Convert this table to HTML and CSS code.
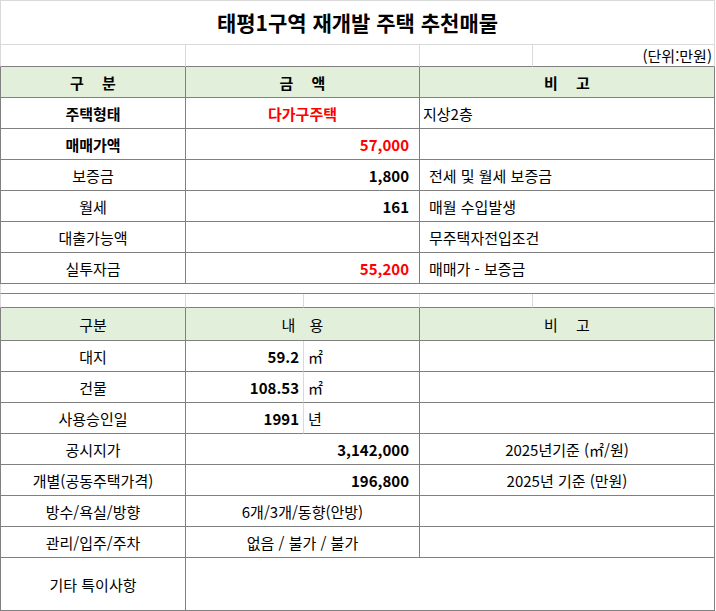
FILE: index.html
```html
<!DOCTYPE html>
<html lang="ko">
<head>
<meta charset="utf-8">
<title>태평1구역 재개발 주택 추천매물</title>
<link rel="stylesheet" href="styles.css">
</head>
<body>
<div class="sheet">
  <!-- title -->
  <div class="c lt first top s5 center title">태평1구역 재개발 주택 추천매물</div>

  <!-- blank / unit row -->
  <div class="c lt first bdk"></div>
  <div class="c lt s2 bdk"></div>
  <div class="c lt bdk"></div>
  <div class="c lt bdk right unit">(단위:만원)</div>

  <!-- table 1 header -->
  <div class="c first hd center bold"><span class="wide">구 분</span></div>
  <div class="c s2 hd center bold"><span class="wide">금 액</span></div>
  <div class="c s2 hd center bold"><span class="wide">비 고</span></div>

  <div class="c first center bold">주택형태</div>
  <div class="c s2 center bold red">다가구주택</div>
  <div class="c s2 note">지상2층</div>

  <div class="c first center bold">매매가액</div>
  <div class="c s2 right num bold red">57,000</div>
  <div class="c s2 note"></div>

  <div class="c first center">보증금</div>
  <div class="c s2 right num bold">1,800</div>
  <div class="c s2 note ind">전세 및 월세 보증금</div>

  <div class="c first center">월세</div>
  <div class="c s2 right num bold">161</div>
  <div class="c s2 note ind">매월 수입발생</div>

  <div class="c first center">대출가능액</div>
  <div class="c s2 right num bold"></div>
  <div class="c s2 note ind">무주택자전입조건</div>

  <div class="c first center">실투자금</div>
  <div class="c s2 right num bold red">55,200</div>
  <div class="c s2 note ind">매매가 - 보증금</div>

  <!-- spacer rows -->
  <div class="c lt first s5 bdk"></div>

  <div class="c lt first bdk"></div>
  <div class="c lt bdk"></div>
  <div class="c lt bdk"></div>
  <div class="c lt bdk"></div>
  <div class="c lt bdk"></div>

  <!-- table 2 header -->
  <div class="c first hd center">구분</div>
  <div class="c s2 hd center"><span class="mid">내 용</span></div>
  <div class="c s2 hd center"><span class="wide">비 고</span></div>

  <div class="c first center">대지</div>
  <div class="c right val bold rlt">59.2</div>
  <div class="c unitcell">㎡</div>
  <div class="c s2"></div>

  <div class="c first center">건물</div>
  <div class="c right val bold rlt">108.53</div>
  <div class="c unitcell">㎡</div>
  <div class="c s2"></div>

  <div class="c first center">사용승인일</div>
  <div class="c right val bold rlt">1991</div>
  <div class="c unitcell">년</div>
  <div class="c s2"></div>

  <div class="c first center">공시지가</div>
  <div class="c s2 right num bold">3,142,000</div>
  <div class="c s2 center">2025년기준 (㎡/원)</div>

  <div class="c first center">개별(공동주택가격)</div>
  <div class="c s2 right num bold">196,800</div>
  <div class="c s2 center">2025년 기준 (만원)</div>

  <div class="c first center">방수/욕실/방향</div>
  <div class="c s2 center">6개/3개/동향(안방)</div>
  <div class="c s2"></div>

  <div class="c first center">관리/입주/주차</div>
  <div class="c s2 center">없음 / 불가 / 불가</div>
  <div class="c s2"></div>

  <div class="c first center">기타 특이사항</div>
  <div class="c s4"></div>
</div>
</body>
</html>
```

FILE: styles.css
```css
html, body {
  margin: 0;
  padding: 0;
  background: #ffffff;
}

.sheet {
  --dk: #808080;
  --lt: #d9d9d9;
  display: grid;
  grid-template-columns: 186px 118px 116px 113px 182px;
  grid-template-rows:
    45px 22px
    31px 31px 31px 31px 31px 31px 31px
    10px 14px
    33px 31px 31px 31px 31px 31px 31px 31px 53px;
  width: 715px;
  font-family: "Noto Sans CJK KR", "Noto Sans", sans-serif;
  font-size: 15px;
  line-height: 1;
  color: #000000;
}

.c {
  box-sizing: border-box;
  display: flex;
  align-items: center;
  padding: 0 3px;
  border-right: 1px solid var(--dk);
  border-bottom: 1px solid var(--dk);
  white-space: nowrap;
  overflow: hidden;
}

.first { border-left: 1px solid var(--dk); }
.top { border-top: 1px solid var(--lt); }

.lt { border-right-color: var(--lt); border-bottom-color: var(--lt); }
.lt.first { border-left-color: var(--lt); }
.bdk { border-bottom-color: var(--dk); }
.rlt { border-right-color: var(--lt); }

.s2 { grid-column: span 2; }
.s4 { grid-column: span 4; }
.s5 { grid-column: span 5; }

.center { justify-content: center; }
.right { justify-content: flex-end; }

.bold { font-weight: 700; }
.red { color: #ff0000; }

.title {
  font-size: 21px;
  font-weight: 700;
}

.unit { padding-right: 2px; }

.hd { background: #e2efda; }

.wide { word-spacing: 14px; }
.mid { word-spacing: 10px; }

.num { padding-right: 10px; }
.val { padding-right: 4px; }
.unitcell { padding-left: 4px; }

.note { padding-left: 3px; }
.ind { padding-left: 9px; }
```
